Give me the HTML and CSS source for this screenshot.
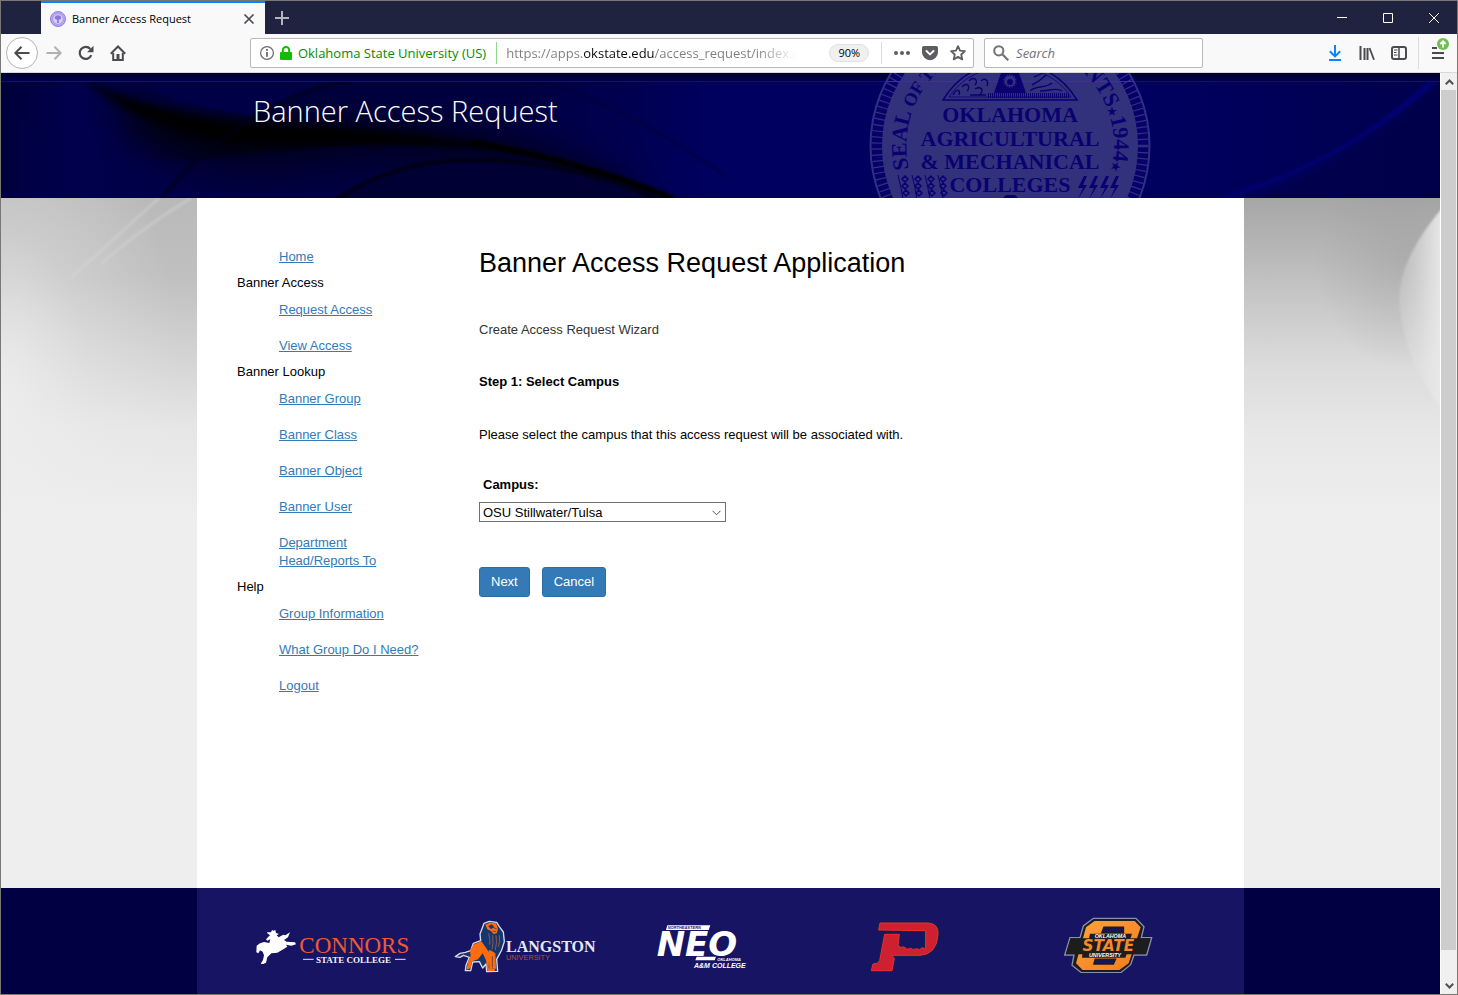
FILE: index.html
```html
<!DOCTYPE html>
<html lang="en">
  <head>
    <meta charset="utf-8">
    <meta name="viewport" content="width=device-width, initial-scale=1">
    <title>Banner Access Request</title>
    <link rel="stylesheet" href="styles.css">
  </head>
  <body>
    <div class="window">
      <!-- TAB STRIP -->
      <div class="titlebar">
        <div class="tab">
          <svg class="favicon" width="16" height="16" viewBox="0 0 16 16">
            <circle cx="8" cy="8" r="7.5" fill="#b9aaf0" stroke="#8f7ae0"/>
            <circle cx="8" cy="8" r="5.3" fill="#d9d0fa" stroke="#a18ee8" stroke-width=".8"/>
            <path d="M8 4.200c-2 0-3.400 1.300-3.200 2.800.1 1 .9 1.700 2.500 1.700L7 12h2l-.3-3.300c1.600 0 2.400-.8 2.500-1.700C11.400 5.500 10 4.200 8 4.200z" fill="#8a74dd"/>
          </svg>
          <span class="tab-title">Banner Access Request</span>
          <button class="tab-close" aria-label="Close tab">
            <svg width="12" height="12" viewBox="0 0 12 12"><path d="M1.500 1.500l9 9M10.500 1.500l-9 9" stroke="#4a4a4f" stroke-width="1.700"/></svg>
          </button>
        </div>
        <button class="new-tab" aria-label="New tab">
          <svg width="14" height="14" viewBox="0 0 14 14"><path d="M7 0v14M0 7h14" stroke="#b4b4c0" stroke-width="2"/></svg>
        </button>
        <div class="caption-buttons">
          <button class="caption-button" aria-label="Minimize"><svg width="10" height="10" viewBox="0 0 10 10"><path d="M0 4.500h10" stroke="#fff"/></svg></button>
          <button class="caption-button" aria-label="Maximize"><svg width="10" height="10" viewBox="0 0 10 10"><path d="M.5.500h9v9h-9z" fill="none" stroke="#fff"/></svg></button>
          <button class="caption-button" aria-label="Close"><svg width="10" height="10" viewBox="0 0 10 10"><path d="M0 0l10 10M10 0L0 10" stroke="#fff"/></svg></button>
        </div>
      </div>

      <!-- NAVIGATION TOOLBAR -->
      <div class="toolbar">
        <button class="tool tool-back" aria-label="Back">
          <svg width="16" height="16" viewBox="0 0 16 16"><path d="M15.500 8H1.500M7.500 1.800L1.300 8l6.200 6.200" fill="none" stroke="#4a4a4f" stroke-width="2"/></svg>
        </button>
        <button class="tool" aria-label="Forward">
          <svg width="16" height="16" viewBox="0 0 16 16"><path d="M.5 8h14M8.500 1.800L14.700 8l-6.200 6.200" fill="none" stroke="#b1b1b3" stroke-width="2"/></svg>
        </button>
        <button class="tool" aria-label="Reload">
          <svg width="16" height="16" viewBox="0 0 16 16"><path d="M13.300 10.200A6 6 0 1 1 12.300 4" fill="none" stroke="#4a4a4f" stroke-width="2.200"/><path d="M15.500.800v6.400H9.100z" fill="#4a4a4f"/></svg>
        </button>
        <button class="tool" aria-label="Home">
          <svg width="16" height="16" viewBox="0 0 16 16"><path d="M.8 8.700L8 1.500l7.200 7.200" fill="none" stroke="#4a4a4f" stroke-width="2"/><path d="M3.200 8v7h9.600V8" fill="none" stroke="#4a4a4f" stroke-width="2"/><path d="M6.500 9h3v6h-3z" fill="#4a4a4f"/></svg>
        </button>
        <div class="spacer"></div>
        <div class="urlbar">
          <svg width="14" height="14" viewBox="0 0 14 14"><circle cx="7" cy="7" r="6.400" fill="none" stroke="#6a6a6e" stroke-width="1.200"/><path d="M6.100 6h1.800v4.800H6.100zM6.100 3h1.800v1.800H6.100z" fill="#6a6a6e"/></svg>
          <svg width="12" height="14" viewBox="0 0 12 14"><path d="M2.800 6.500V4.200a3.200 3.200 0 0 1 6.400 0v2.300" fill="none" stroke="#12bc00" stroke-width="2"/><rect y="6" width="12" height="8" rx="1" fill="#12bc00"/></svg>
          <span class="identity">Oklahoma State University (US)</span>
          <input class="url" type="text" aria-label="Address" value="https://apps.okstate.edu/access_request/index.php">
          <span class="zoom-level">90%</span>
          <div class="url-actions">
            <button class="url-button" aria-label="Page actions"><svg width="16" height="16" viewBox="0 0 16 16"><g fill="#5c5c61"><circle cx="2" cy="8" r="2"/><circle cx="8" cy="8" r="2"/><circle cx="14" cy="8" r="2"/></g></svg></button>
            <button class="url-button" aria-label="Save to Pocket"><svg width="16" height="16" viewBox="0 0 16 16"><path d="M1.800 1h12.400A1.800 1.800 0 0 1 16 2.800v4.400a8 8 0 0 1-16 0V2.800A1.800 1.800 0 0 1 1.800 1z" fill="#5c5c61"/><path d="M4.500 6L8 9.400 11.500 6" fill="none" stroke="#fff" stroke-width="2" stroke-linecap="round" stroke-linejoin="round"/></svg></button>
            <button class="url-button" aria-label="Bookmark this page"><svg width="16" height="16" viewBox="0 0 16 16"><path d="M8 1.200l2 4.500 4.900.500-3.700 3.300 1.100 4.900L8 11.900l-4.300 2.500 1.100-4.900L1.100 6.200 6 5.700z" fill="none" stroke="#5c5c61" stroke-width="1.800" stroke-linejoin="round"/></svg></button>
          </div>
        </div>
        <div class="searchbar">
          <svg width="16" height="16" viewBox="0 0 16 16"><circle cx="5.800" cy="5.800" r="4.600" fill="none" stroke="#737377" stroke-width="2"/><path d="M9.300 9.300l6 6" stroke="#737377" stroke-width="2.200"/></svg>
          <input class="search" type="text" aria-label="Search" placeholder="Search">
        </div>
        <div class="spacer"></div>
        <button class="tool" aria-label="Downloads">
          <svg width="16" height="16" viewBox="0 0 16 16"><path d="M8 0v11M2.800 6.200L8 11.400l5.200-5.200" fill="none" stroke="#0a84ff" stroke-width="2"/><path d="M2 15h12" stroke="#0a84ff" stroke-width="2"/></svg>
        </button>
        <button class="tool" aria-label="Library">
          <svg width="16" height="16" viewBox="0 0 16 16"><path d="M1.500 1v14M5.500 3v12M8.500 3v12" stroke="#4a4a4f" stroke-width="2"/><path d="M10.500 3L15 14.800" stroke="#4a4a4f" stroke-width="1.800"/></svg>
        </button>
        <button class="tool" aria-label="Sidebars">
          <svg width="16" height="16" viewBox="0 0 16 16"><rect x="1" y="2" width="14" height="12" rx="2" fill="none" stroke="#4a4a4f" stroke-width="2"/><path d="M8 2v12" stroke="#4a4a4f" stroke-width="1.500"/><path d="M3 5h3.500M3 7.500h2.500M3 10h3.500" stroke="#4a4a4f"/></svg>
        </button>
        <div class="tool-separator"></div>
        <button class="tool" aria-label="Open menu">
          <svg class="menu-icon" width="24" height="24" viewBox="0 0 24 24"><path d="M5 7h5M5 12h12M5 17h12" stroke="#4a4a4f" stroke-width="2"/><circle cx="16" cy="3" r="6" fill="#70bf53"/><path d="M16 6.500V1M13.300 3L16 .3 18.700 3" fill="none" stroke="#fff" stroke-width="1.800"/></svg>
        </button>
      </div>

      <div class="viewport">
        <div class="page">
          <!-- HEADER -->
          <header class="header">
            <svg class="header-art" viewBox="0 0 1439 125" preserveAspectRatio="xMidYMin slice">
              <defs>
                <linearGradient id="sky" x1="0" x2="1" y1="0" y2="0">
                  <stop offset="0" stop-color="#00003a"/>
                  <stop offset=".05" stop-color="#00004d"/>
                  <stop offset=".18" stop-color="#00003c"/>
                  <stop offset=".36" stop-color="#000040"/>
                  <stop offset=".5" stop-color="#000060"/>
                  <stop offset=".8" stop-color="#000060"/>
                  <stop offset="1" stop-color="#00004e"/>
                </linearGradient>
                <linearGradient id="topshade" x1="0" x2="0" y1="0" y2="1">
                  <stop offset="0" stop-color="#00002a"/>
                  <stop offset="1" stop-color="#000050"/>
                </linearGradient>
                <filter id="soft" x="-20%" y="-60%" width="140%" height="220%"><feGaussianBlur stdDeviation="16"/></filter>
                <filter id="mid" x="-10%" y="-40%" width="120%" height="180%"><feGaussianBlur stdDeviation="4"/></filter>
                <filter id="fine" x="-5%" y="-10%" width="110%" height="120%"><feGaussianBlur stdDeviation="1"/></filter>
                <clipPath id="sealclip"><circle cx="1009" cy="73" r="128"/></clipPath>
              </defs>
              <rect width="1439" height="125" fill="url(#sky)"/>
              <!-- swooshes -->
              <path d="M110 20C180 50 240 50 330 52C450 56 560 80 650 118L560 120C480 90 380 80 300 92C220 100 170 90 130 60z" fill="#000006" opacity=".8" filter="url(#soft)"/>
              <path d="M82 4C120 28 180 42 240 50C330 53 400 58 470 70C560 86 620 108 670 126L650 126C600 100 520 76 400 72C330 72 270 74 220 68C160 58 110 34 82 4z" fill="#000006" filter="url(#mid)"/>
              <path d="M132 8C170 28 205 36 250 42C275 30 310 14 345 8z" fill="#000046" filter="url(#fine)"/>
              <path d="M0 25C30 62 75 84 130 88C190 92 260 78 340 73C420 72 500 72 560 90L690 125H0z" fill="#00004c" opacity=".3" filter="url(#fine)"/>
              <path d="M160 126C190 90 225 55 290 25C310 16 330 10 350 8" fill="none" stroke="#000018" stroke-width="4" opacity=".6" filter="url(#fine)"/>
              <path d="M336 126C380 96 430 86 480 87C550 89 610 106 652 126z" fill="#000036" filter="url(#fine)"/>
              <path d="M336 126C380 96 430 86 480 87C550 89 610 106 655 126" fill="none" stroke="#000008" stroke-width="3" filter="url(#fine)"/>
              <path d="M470 69C560 86 625 106 672 126" fill="none" stroke="#000004" stroke-width="6" filter="url(#fine)"/>
              <path d="M530 8C600 22 680 70 725 104" fill="none" stroke="#000038" stroke-width="2" opacity=".7" filter="url(#fine)"/>
              <path d="M1225 126C1310 100 1380 60 1436 9L1426 9C1370 60 1310 98 1210 126z" fill="#000072" filter="url(#fine)"/>
              <path d="M1250 126C1330 98 1390 60 1439 12V126z" fill="#000046" opacity=".6" filter="url(#fine)"/>
              <rect width="1439" height="8" fill="url(#topshade)"/>
              <path d="M0 8.500H1439" stroke="#16069a"/>
              <!-- seal -->
              <circle cx="1009" cy="73" r="139.500" fill="#07006a" stroke="#2f2f85" stroke-width="2"/>
              <circle cx="1009" cy="73" r="133" fill="none" stroke="#31317d" stroke-width="11" stroke-dasharray="1.200 4.800"/>
              <circle cx="1009" cy="73" r="128" fill="#32327c"/>
              <path d="M885 8.500h248" stroke="#3f2fa0"/>
              <g clip-path="url(#sealclip)">
                <path d="M942 27C956 4 978 -10 1009 -10S1062 4 1076 27z" fill="none" stroke="#0a0070" stroke-width="1.500"/>
                <path d="M948 24C960 6 980 -6 1009 -6S1058 6 1070 24z" fill="none" stroke="#0a0070" stroke-width=".8"/>
                <path d="M987 22.500h82" stroke="#0a0070" stroke-width="5" stroke-dasharray="1 1"/>
                <path d="M952 22c4-8 8-4 6 0m3-8c5-6 9 0 5 4m2-10c5-6 10 0 6 4m0 4c6-4 10 2 4 6m2-14c4-4 8 0 6 5m-17 9h16" fill="none" stroke="#0a0070" stroke-width="1.400"/>
                <path d="M1029 18c6-6 14-2 22-8m-20 2c8-4 10-6 14-10m-6 16c10 0 16-4 22 0m-28-14c6-2 8-4 12-6" fill="none" stroke="#0a0070" stroke-width="1.400"/>
                <path d="M1000 0L993 20h32L1018 0z" fill="#0a0070"/>
                <circle cx="1009" cy="8" r="7" fill="#32327c" stroke="#0a0070" stroke-width="3" stroke-dasharray="2 1"/>
                <circle cx="1009" cy="9" r="3" fill="#0a0070"/>
                <path id="leftarc" d="M908 96A104 104 0 0 1 1009 -31" fill="none"/>
                <path id="rightarc" d="M1009 -31A104 104 0 0 1 1110 98" fill="none"/>
              </g>
              <g class="seal-text">
                <text x="1009" y="49">OKLAHOMA</text>
                <text x="1009" y="73">AGRICULTURAL</text>
                <text x="1009" y="96">&amp; MECHANICAL</text>
                <text x="1009" y="119">COLLEGES</text>
                <text class="seal-left"><textPath href="#leftarc">SEAL <tspan class="seal-small">OF THE</tspan></textPath></text>
                <text class="seal-right"><textPath href="#rightarc" startOffset="100%">NTS<tspan class="seal-star">★</tspan>1944<tspan class="seal-star">★</tspan></textPath></text>
              </g>
              <!-- wheat and lightning at the foot of the seal -->
              <g fill="none" stroke="#0a0070">
                <path d="M897 102q3 12 5 24M911 102q3 12 5 24M924 102q3 12 5 24M937 102q3 12 5 24" stroke-width="1"/>
                <path d="M904 103l-3 3 3 3 3-3zm0 7l-3 3 3 3 3-3zm1 7l-3 3 3 3 3-3zM917 103l-3 3 3 3 3-3zm0 7l-3 3 3 3 3-3zm1 7l-3 3 3 3 3-3zM930 103l-3 3 3 3 3-3zm0 7l-3 3 3 3 3-3zm1 7l-3 3 3 3 3-3zM942 103l-3 3 3 3 3-3zm0 7l-3 3 3 3 3-3zm1 7l-3 3 3 3 3-3z" stroke-width="1.500"/>
              </g>
              <path d="M1083 103l-6 12h5l-5 11 9-14h-4l4-9zM1094 103l-6 12h5l-5 11 9-14h-4l4-9zM1105 103l-6 12h5l-5 11 9-14h-4l4-9zM1115 103l-6 12h5l-5 11 9-14h-4l4-9z" fill="#0a0070"/>
              <path d="M1002 125l3-3h9l3 3z" fill="#0a0070"/>
            </svg>
            <div class="header-title">Banner Access Request</div>
          </header>

          <!-- BODY -->
          <div class="columns">
            <div class="gutter gutter-left">
              <svg class="gutter-art" viewBox="0 0 196 320" preserveAspectRatio="none">
                <defs><filter id="haze"><feGaussianBlur stdDeviation="1"/></filter></defs>
                <path d="M70 80L158 0M100 66C130 40 150 25 190 0" fill="none" stroke="#d6d6d6" stroke-width="3" opacity=".45" filter="url(#haze)"/>
              </svg>
            </div>
            <div class="content">
              <nav class="sidenav">
                <ul class="nav-list">
                  <li><a href="#">Home</a></li>
                </ul>
                <div class="nav-heading">Banner Access</div>
                <ul class="nav-list">
                  <li><a href="#">Request Access</a></li>
                  <li><a href="#">View Access</a></li>
                </ul>
                <div class="nav-heading">Banner Lookup</div>
                <ul class="nav-list">
                  <li><a href="#">Banner Group</a></li>
                  <li><a href="#">Banner Class</a></li>
                  <li><a href="#">Banner Object</a></li>
                  <li><a href="#">Banner User</a></li>
                  <li><a href="#">Department Head/Reports To</a></li>
                </ul>
                <div class="nav-heading">Help</div>
                <ul class="nav-list">
                  <li><a href="#">Group Information</a></li>
                  <li><a href="#">What Group Do I Need?</a></li>
                  <li><a href="#">Logout</a></li>
                </ul>
              </nav>
              <main class="main">
                <h1>Banner Access Request Application</h1>
                <p class="wizard-name">Create Access Request Wizard</p>
                <h2>Step 1: Select Campus</h2>
                <p class="hint">Please select the campus that this access request will be associated with.</p>
                <form class="campus-form">
                  <label for="campus">Campus:</label>
                  <div class="select-wrap">
                    <select id="campus">
                      <option>OSU Stillwater/Tulsa</option>
                    </select>
                    <svg class="select-arrow" width="9" height="6" viewBox="0 0 9 6"><path d="M.5.800l4 4 4-4" fill="none" stroke="#555"/></svg>
                  </div>
                  <div class="form-actions">
                    <button class="btn" type="button">Next</button>
                    <button class="btn" type="button">Cancel</button>
                  </div>
                </form>
              </main>
            </div>
            <div class="gutter gutter-right">
              <svg class="gutter-art" viewBox="0 0 196 320" preserveAspectRatio="none">
                <defs>
                  <linearGradient id="curve" x1="0" x2="1" y1="0" y2="0"><stop offset="0" stop-color="#ddd" stop-opacity=".3"/><stop offset="1" stop-color="#eaeaea"/></linearGradient>
                  <radialGradient id="shade"><stop offset="0" stop-color="#999" stop-opacity=".4"/><stop offset="1" stop-color="#999" stop-opacity="0"/></radialGradient>
                </defs>
                <ellipse cx="160" cy="60" rx="90" ry="110" fill="url(#shade)"/>
                <path d="M200 8C160 54 152 90 156 112C160 150 176 180 200 215z" fill="url(#curve)" filter="url(#haze)"/>
              </svg>
            </div>
          </div>

          <!-- FOOTER LOGOS -->
          <footer class="footer">
            <div class="logos">
              <a href="#" aria-label="Connors State College">
                <svg width="160" height="64" viewBox="72 27 480 192">
                  <path d="M80 137L90 130 102 126 118 129 121 118 112 122 108 118 120 106 112 100 111 97 123 97 126 90 130 92 136 90 138 99 147 102 140 106 146 112 160 104 166 106 180 97 174 112 162 120 170 125 195 127 198 133 184 137 168 134 172 140 160 148 142 158 124 160 112 172 108 188 100 192 92 191 99 180 102 166 98 155 90 151 85 160 79 157z" fill="#fff"/>
                  <text class="connors" x="208" y="159">CONNORS</text>
                  <text class="state-college" x="258" y="188">STATE COLLEGE</text>
                  <path d="M219 178h32M495 178h32" stroke="#e4e4ee" stroke-width="3"/>
                </svg>
              </a>
              <a href="#" aria-label="Langston University">
                <svg width="150" height="64" viewBox="666 27 450 192">
                  <path d="M762 70L778 64 800 67 808 80 820 96 823 125 815 150 800 178 803 214 770 215 768 192 758 204 748 185 728 186 722 212 706 212 708 196 718 172 700 166 690 172 676 170 690 160 706 157 722 152 730 130 752 122 750 102z" fill="#15376e" stroke="#d8dce8" stroke-width="4" stroke-linejoin="round"/>
                  <path d="M730 134L754 124 766 140 778 158 776 205 796 208 794 213 772 213 768 180 758 160 744 178 726 184 722 204 710 210 710 204 716 180 722 168 720 152z" fill="#ff6c10"/>
                  <path d="M766 74L780 68 798 70 804 86 800 100 790 102 784 94 772 88zM776 150l8 2 12 8 2 46-20 0z" fill="#ff6c10"/>
                  <path d="M776 78l10-4 6 8-10 4zM792 84l8 2M788 94h10M787 168v34" fill="#15376e" stroke="#15376e" stroke-width="2"/>
                  <path d="M788 106q3 22-2 42M798 106q4 20-2 44M808 106q3 18-3 34M776 100q6 20 3 34" fill="none" stroke="#c96a3a" stroke-width="2"/>
                  <text class="langston" x="828" y="156">LANGSTON</text>
                  <text class="university" x="828" y="179">UNIVERSITY</text>
                </svg>
              </a>
              <a href="#" aria-label="Northeastern Oklahoma A&amp;M College">
                <svg width="110" height="64" viewBox="60 27 330 192">
                  <path d="M112 76H241L236 90H108zM200 170h58l-4 11h-58z" fill="#fff"/>
                  <text class="neo" x="80" y="168">NEO</text>
                  <text class="neo-dark" x="113" y="88">NORTHEASTERN</text>
                  <text class="neo-small" x="262" y="182">OKLAHOMA</text>
                  <text class="neo-college" x="192" y="204">A&amp;M COLLEGE</text>
                </svg>
              </a>
              <a href="#" aria-label="Oklahoma Panhandle State University">
                <svg width="100" height="64" viewBox="654 27 300 192">
                  <g stroke-linejoin="round">
                    <path d="M750 69H895Q927 72 924 104Q920 163 870 166H785L793 175 786 212H724L729 192 742 190 749 182 764 103H808L804 135 812 142 822 141 832 148 842 145 850 149 860 146 868 149 878 143 887 148V92L746 90z" fill="#cf2031" stroke="#0b2350" stroke-width="10"/>
                    <path d="M750 69H895Q927 72 924 104Q920 163 870 166H785L793 175 786 212H724L729 192 742 190 749 182 764 103H808L804 135 812 142 822 141 832 148 842 145 850 149 860 146 868 149 878 143 887 148V92L746 90z" fill="#cf2031" stroke="#ee2c2f" stroke-width="3"/>
                  </g>
                </svg>
              </a>
              <a href="#" aria-label="Oklahoma State University">
                <svg width="120" height="64" viewBox="18 27 360 192">
                  <defs><linearGradient id="osu" x1="0" x2="1" y1="0" y2="1"><stop offset="0" stop-color="#ffa33c"/><stop offset="1" stop-color="#f07c1c"/></linearGradient></defs>
                  <path d="M160 55H288L312 80 304 113H335L320 165H282L272 194 242 218H124L96 196 102 165H74L90 113H120L130 78z" fill="#1d1c1e" stroke="#8791a8" stroke-width="4"/>
                  <path d="M164 63H284L302 82 266 190 238 210H128L108 190 138 82z" fill="url(#osu)"/>
                  <path d="M192 82H250V98H186zM166 178H226L220 192H162z" fill="#161463" stroke="#1d1c1e" stroke-width="5"/>
                  <path d="M92 115H331L317 163H78z" fill="#1d1c1e"/>
                  <path d="M150 101H276L270 119H146zM128 156H262L256 173H126z" fill="#1d1c1e"/>
                  <text class="osu-small" x="211" y="115">OKLAHOMA</text>
                  <text class="osu-state" x="205" y="153">STATE</text>
                  <text class="osu-small" x="195" y="170">UNIVERSITY</text>
                </svg>
              </a>
            </div>
          </footer>
        </div>

        <!-- SCROLLBAR -->
        <div class="scrollbar">
          <div class="scroll-arrow"><svg width="9" height="6" viewBox="0 0 9 6"><path d="M.8 5.200l3.700-3.700 3.700 3.700" fill="none" stroke="#505050" stroke-width="2"/></svg></div>
          <div class="scroll-track"><div class="scroll-thumb"></div></div>
          <div class="scroll-arrow"><svg width="9" height="6" viewBox="0 0 9 6"><path d="M.8.800l3.700 3.700L8.200.800" fill="none" stroke="#505050" stroke-width="2"/></svg></div>
        </div>
      </div>
    </div>
  </body>
</html>
```
FILE: styles.css
```css
* { box-sizing: border-box; }
body {
  margin: 0;
  font-family: "Liberation Sans", Arial, sans-serif;
  font-size: 13px;
  line-height: 18px;
  color: #000;
}
button {
  border: 0;
  padding: 0;
  background: none;
  font-family: inherit;
}
svg { display: block; flex: none; }

/* WINDOW */
.window {
  display: flex;
  flex-direction: column;
  min-height: 100vh;
  border: 1px solid #7a7674;
}

/* TAB STRIP */
.titlebar {
  display: flex;
  height: 33px;
  padding-left: 40px;
  background: #202340;
}
.tab {
  display: flex;
  align-items: center;
  gap: 6px;
  width: 224px;
  padding: 0 10px 0 9px;
  border-top: 2px solid #0a84ff;
  background: #f9f9fa;
  font-family: "Open Sans", "Noto Sans", sans-serif;
  font-size: 11px;
}
.tab-title { flex: 1; white-space: nowrap; }
.new-tab { padding: 0 10px; }
.caption-buttons { display: flex; margin-left: auto; }
.caption-button {
  display: flex;
  align-items: center;
  justify-content: center;
  width: 46px;
}

/* TOOLBAR */
.toolbar {
  display: flex;
  align-items: center;
  height: 39px;
  padding: 0 2px 0 5px;
  border-bottom: 1px solid #d8d8da;
  background: #f9f9fa;
  font-family: "Open Sans", "Noto Sans", sans-serif;
}
.tool {
  display: flex;
  align-items: center;
  justify-content: center;
  flex: none;
  width: 32px;
  height: 32px;
}
.tool-back {
  border: 1px solid #b5b5b7;
  border-radius: 50%;
  background: #fff;
}
.tool-separator {
  width: 1px;
  height: 32px;
  margin: 0 4px 0 3px;
  background: #dcdcde;
}
.menu-icon { overflow: visible; }
.spacer { width: 8%; }
.urlbar, .searchbar {
  display: flex;
  align-items: center;
  height: 30px;
  border: 1px solid #b9b9bc;
  border-radius: 2px;
  background: #fff;
}
.urlbar {
  flex: 1;
  min-width: 0;
  gap: 6px;
  padding: 0 7px 0 9px;
}
.identity {
  padding-right: 10px;
  border-right: 1px solid #8fd88c;
  line-height: 22px;
  color: #058b00;
  white-space: nowrap;
}
.url, .search {
  flex: 1;
  min-width: 0;
  border: 0;
  padding: 0;
  outline: 0;
  background: transparent;
  font-family: inherit;
  font-size: 13px;
}
/* host is black, the rest grey, and the end fades out */
.url {
  margin-left: 3px;
  background: linear-gradient(to right, #7c7c80 77px, #0c0c0d 77px, #0c0c0d 149px, #7c7c80 149px, #7c7c80 250px, transparent 290px);
  -webkit-background-clip: text;
  background-clip: text;
  -webkit-text-fill-color: transparent;
}
.zoom-level {
  margin-left: 28px;
  padding: 0 8px;
  border: 1px solid #e0e0e2;
  border-radius: 9px;
  background: #f0f0f1;
  font-size: 11px;
  line-height: 16px;
}
.url-actions {
  display: flex;
  gap: 12px;
  margin-left: 6px;
  padding-left: 12px;
  border-left: 1px solid #dcdcde;
  height: 22px;
  align-items: center;
}
.searchbar {
  gap: 7px;
  width: 219px;
  margin-left: 10px;
  padding: 0 8px;
}
.search::placeholder { color: #737377; font-style: italic; opacity: 1; }

/* PAGE */
.viewport { display: flex; flex: 1; }
.page {
  display: flex;
  flex-direction: column;
  flex: 1;
  min-width: 0;
  background: #eee;
}

/* HEADER */
.header {
  position: relative;
  overflow: hidden;
  padding: 17px 0 66px 252px;
  background: #000050;
}
.header-art {
  position: absolute;
  top: 0;
  left: 0;
  width: 100%;
  height: 100%;
}
.header-title {
  position: relative;
  font-family: "Open Sans", sans-serif;
  font-weight: 300;
  font-size: 29px;
  line-height: 42px;
  color: #fff;
}
.seal-text {
  font-family: "Liberation Serif", serif;
  font-weight: bold;
  font-size: 22px;
  text-anchor: middle;
  fill: #0a0070;
}
.seal-left { text-anchor: start; }
.seal-right { text-anchor: end; }
.seal-small { font-size: 18px; }
.seal-star { font-size: 11px; }

/* COLUMNS */
.columns {
  display: grid;
  grid-template-columns: 1fr minmax(0, 1047px) 1fr;
  flex: 1;
}
.gutter { position: relative; background: #eee; }
.gutter-left {
  background:
    radial-gradient(ellipse 180px 340px at 0 200px, rgba(238, 238, 238, .9) 0%, rgba(238, 238, 238, .3) 50%, rgba(238, 238, 238, 0) 100%),
    linear-gradient(to bottom, #b9b9b9 0, #c0c0c0 80px, #d4d4d4 160px, #e6e6e6 230px, #eee 320px);
}
.gutter-right {
  background: linear-gradient(to bottom, #a6a6a6 0, #b6b6b6 50px, #cacaca 110px, #dcdcdc 170px, #e8e8e8 240px, #eee 320px);
}
.gutter-art {
  position: absolute;
  top: 0;
  left: 0;
  width: 100%;
  height: 320px;
}
.content {
  display: flex;
  gap: 40px;
  padding: 50px 40px;
  background: #fff;
}

/* SIDE NAVIGATION */
.sidenav { width: 202px; }
.nav-list {
  display: flex;
  flex-direction: column;
  gap: 18px;
  margin: 0;
  padding: 0 20px 0 42px;
  list-style: none;
}
.nav-heading { margin: 8px 0 9px; }
a { color: #337ab7; }

/* MAIN */
.main { flex: 1; }
h1 {
  margin: 0 0 43px;
  font-size: 27px;
  font-weight: normal;
  line-height: 30px;
}
h2 {
  margin: 0 0 35px;
  font-size: 13px;
  line-height: 18px;
}
p { margin: 0 0 35px; }
.wizard-name { margin-bottom: 34px; color: #333; }
.hint { margin-bottom: 32px; }
.campus-form label {
  display: block;
  margin: 0 0 8px 4px;
  font-weight: bold;
}
.select-wrap { position: relative; width: 247px; }
.select-wrap select {
  display: block;
  width: 100%;
  height: 20px;
  padding: 0 3px;
  border: 1px solid #707070;
  border-radius: 0;
  appearance: none;
  background: #fff;
  font-family: inherit;
  font-size: 13px;
  color: #000;
}
.select-arrow { position: absolute; right: 5px; top: 8px; pointer-events: none; }
.form-actions { display: flex; gap: 12px; margin-top: 45px; }
.btn {
  padding: 0 11px;
  border: 1px solid #2e6da4;
  border-radius: 3px;
  background: #337ab7;
  font-size: 13px;
  line-height: 28px;
  color: #fff;
}

/* FOOTER */
.footer {
  display: grid;
  grid-template-columns: 1fr minmax(0, 1047px) 1fr;
  height: 106px;
  background: #000043;
}
.logos {
  grid-column: 2;
  display: grid;
  grid-template-columns: repeat(5, 1fr);
  align-items: center;
  padding-left: 57px;
  background: #161463;
}
.connors, .state-college, .langston { font-family: "Liberation Serif", serif; }
.connors { font-size: 69px; fill: #ee5a32; }
.state-college { font-size: 27px; font-weight: bold; fill: #f4f4fa; }
.langston { font-size: 48px; font-weight: bold; fill: #e6e8f2; }
.university { font-size: 22px; fill: #b4532f; }
.neo, .neo-dark, .neo-small, .neo-college { font-weight: bold; font-style: italic; fill: #fff; }
.neo { font-family: "DejaVu Sans", sans-serif; font-size: 102px; }
.neo-dark { font-size: 12px; fill: #161463; }
.neo-small { font-size: 12px; }
.neo-college { font-size: 21px; }
.osu-small, .osu-state { font-weight: bold; font-style: italic; text-anchor: middle; }
.osu-small { font-size: 16px; fill: #fff; }
.osu-state { font-family: "DejaVu Sans", sans-serif; font-size: 46px; fill: #f58a2a; }

/* SCROLLBAR */
.scrollbar {
  display: flex;
  flex-direction: column;
  width: 17px;
  border-left: 1px solid #fff;
  background: #f0f0f0;
}
.scroll-arrow {
  display: flex;
  align-items: center;
  justify-content: center;
  height: 17px;
}
.scroll-track { flex: 1; display: flex; }
.scroll-thumb {
  width: 15px;
  height: 97%;
  background: #cdcdcd;
}
```
